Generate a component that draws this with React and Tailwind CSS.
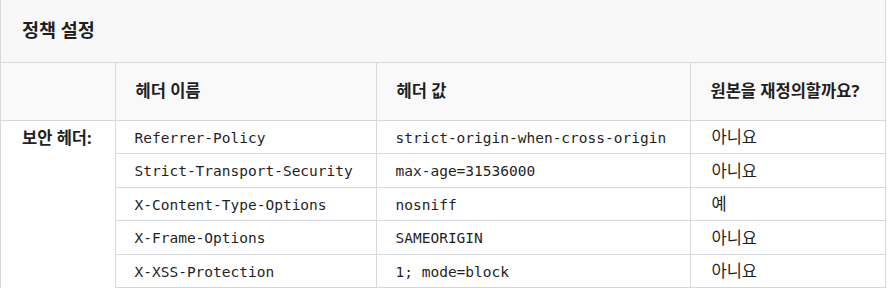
const rows = [
  ['Referrer-Policy', 'strict-origin-when-cross-origin', '아니요'],
  ['Strict-Transport-Security', 'max-age=31536000', '아니요'],
  ['X-Content-Type-Options', 'nosniff', '예'],
  ['X-Frame-Options', 'SAMEORIGIN', '아니요'],
  ['X-XSS-Protection', '1; mode=block', '아니요'],
]

const kr = "font-['Noto_Sans','Noto_Sans_CJK_KR',sans-serif]"

export default function App() {
  return (
    <div className={`w-[888px] h-[288px] overflow-hidden bg-white text-[#1f1f1f] ${kr}`}>
      <div className="w-[886px] border-x border-[#d7dadc]">
        <div className="h-[63px] bg-[#f8f8f8] border-b border-[#d7dadc] flex items-center px-[21px]">
          <h2 className="text-[18.5px] font-bold leading-none pb-[2px]">정책 설정</h2>
        </div>
        <table className="w-full border-collapse table-fixed">
          <colgroup>
            <col className="w-[114px]" />
            <col className="w-[261px]" />
            <col className="w-[314px]" />
            <col />
          </colgroup>
          <thead>
            <tr className="h-[57px] bg-[#f9f9f9] border-b border-[#d7dadc]">
              <th className="border-r border-[#d7dadc]"></th>
              <th className="text-left font-bold text-[16.5px] pl-[20px] border-r border-[#d7dadc]">헤더 이름</th>
              <th className="text-left font-bold text-[16.5px] pl-[20px] border-r border-[#d7dadc]">헤더 값</th>
              <th className="text-left font-bold text-[16.5px] pl-[20px]">원본을 재정의할까요?</th>
            </tr>
          </thead>
          <tbody>
            {rows.map((r, i) => (
              <tr key={r[0]} className="h-[33.5px]">
                {i === 0 && (
                  <td rowSpan={5} className="align-top pt-[5px] pl-[21px] font-bold text-[16.5px] border-r border-[#d7dadc]">
                    보안 헤더:
                  </td>
                )}
                <td className="pl-[19px] pt-[4px] border-r border-b border-[#d7dadc] font-['DejaVu_Sans_Mono',monospace] text-[14.5px]">{r[0]}</td>
                <td className="pl-[19px] pt-[4px] border-r border-b border-[#d7dadc] font-['DejaVu_Sans_Mono',monospace] text-[14.5px]">{r[1]}</td>
                <td className="pl-[21px] pt-[2px] border-b border-[#d7dadc] text-[16.5px]">{r[2]}</td>
              </tr>
            ))}
          </tbody>
        </table>
      </div>
    </div>
  )
}
